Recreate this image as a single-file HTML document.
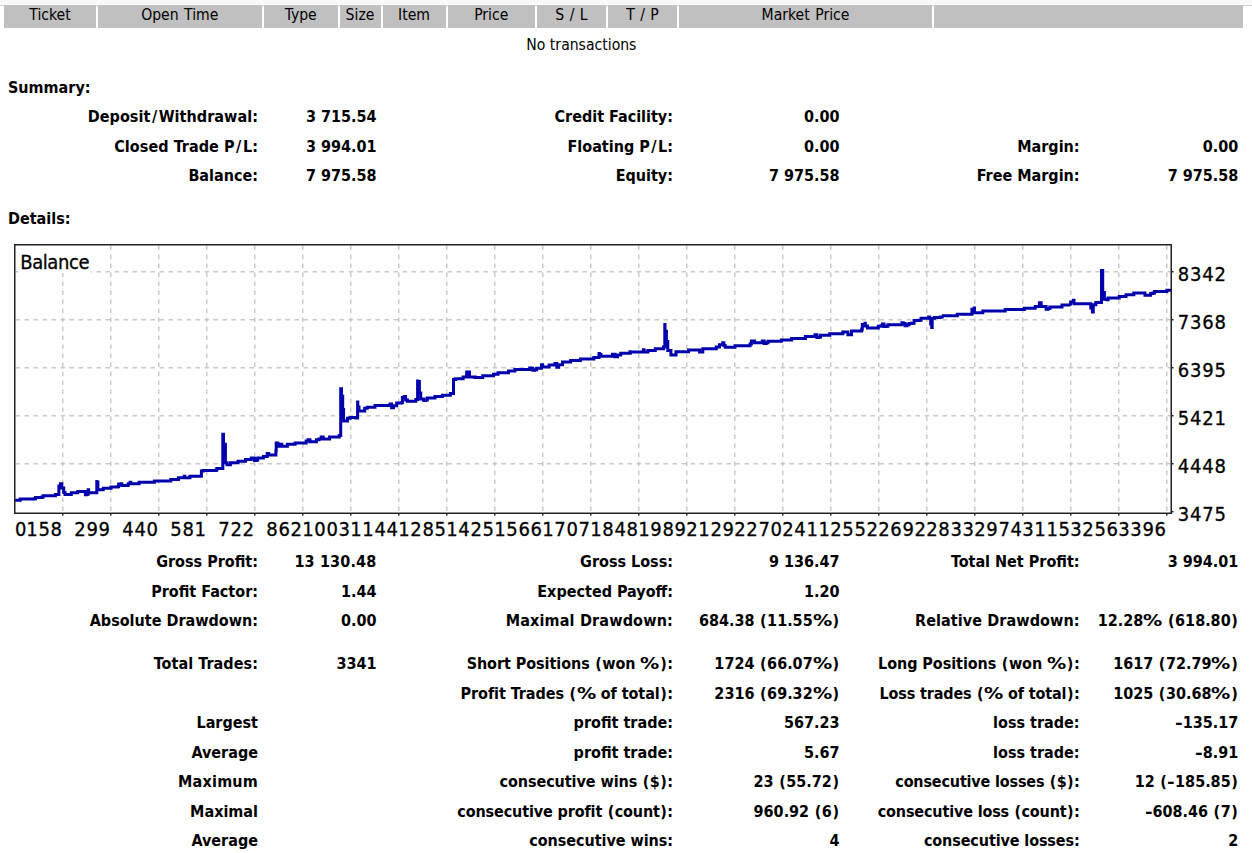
<!DOCTYPE html>
<html><head><meta charset="utf-8"><title>Statement</title>
<style>
html,body{margin:0;padding:0;background:#fff;}
body{width:1252px;height:853px;position:relative;overflow:hidden;font-family:"DejaVu Sans","Liberation Sans",sans-serif;font-stretch:condensed;color:#000;}
.topband{position:absolute;left:0;top:0;width:1252px;height:4px;background:#f8f8fa;border-bottom:1px solid #fdfdfd;}
.topline{position:absolute;left:0;top:5px;width:1252px;height:1px;background:#d0d0d0;}
.hc{position:absolute;top:5px;height:22.7px;word-spacing:1px;background:#c0c0c0;text-align:center;font-size:15.6px;line-height:20px;padding-top:0;box-sizing:border-box;white-space:nowrap;}
.t{position:absolute;white-space:nowrap;line-height:20px;height:20px;}
.b{font-weight:bold;font-size:16px;}
.r{font-size:15.6px;}
.b i{font-style:normal;padding:0 1.5px;}
.b u{text-decoration:none;display:inline-block;width:19.2px;transform-origin:0 50%;transform:scaleX(1.333);}
.b s{text-decoration:none;padding:0 0.55px;}
.b .m{display:inline-block;width:7.7px;transform-origin:0 50%;transform:scaleX(1.28);}
</style></head><body>
<div class="topband"></div><div class="topline"></div>
<div class="hc" style="left:4px;width:92px">Ticket</div>
<div class="hc" style="left:97.5px;width:164.5px">Open Time</div>
<div class="hc" style="left:264px;width:73.5px">Type</div>
<div class="hc" style="left:339.5px;width:41.0px">Size</div>
<div class="hc" style="left:382.5px;width:63.0px">Item</div>
<div class="hc" style="left:447.5px;width:87.5px">Price</div>
<div class="hc" style="left:537px;width:69px">S / L</div>
<div class="hc" style="left:608px;width:69px">T / P</div>
<div class="hc" style="left:679px;width:253px">Market Price</div>
<div class="hc" style="left:934px;width:309px"></div>
<div class="t r" style="top:35.20px;left:381.4px;width:400px;text-align:center">No transactions</div>
<div class="t b" style="top:77.90px;left:8px">Summary:</div>
<div class="t b" style="top:208.90px;left:8px">Details:</div>
<div class="t b" style="top:107.30px;right:994px;letter-spacing:0.05px">Deposit<i>/</i>Withdrawal:</div>
<div class="t b" style="top:107.30px;right:875.5px">3 715.54</div>
<div class="t b" style="top:107.30px;right:579px">Credit Facility:</div>
<div class="t b" style="top:107.30px;right:412.5px">0.00</div>
<div class="t b" style="top:136.80px;right:994px;letter-spacing:0.06px">Closed Trade P<i>/</i>L:</div>
<div class="t b" style="top:136.80px;right:875.5px">3 994.01</div>
<div class="t b" style="top:136.80px;right:579px">Floating P<i>/</i>L:</div>
<div class="t b" style="top:136.80px;right:412.5px">0.00</div>
<div class="t b" style="top:136.80px;right:172.4px">Margin:</div>
<div class="t b" style="top:136.80px;right:13.7px">0.00</div>
<div class="t b" style="top:166.10px;right:994px">Balance:</div>
<div class="t b" style="top:166.10px;right:875.5px">7 975.58</div>
<div class="t b" style="top:166.10px;right:579px">Equity:</div>
<div class="t b" style="top:166.10px;right:412.5px">7 975.58</div>
<div class="t b" style="top:166.10px;right:172.4px">Free Margin:</div>
<div class="t b" style="top:166.10px;right:13.7px">7 975.58</div>
<div class="t b" style="top:552.10px;right:994px">Gross Profit:</div>
<div class="t b" style="top:552.10px;right:875.5px;letter-spacing:0.17px">13 130.48</div>
<div class="t b" style="top:552.10px;right:579px">Gross Loss:</div>
<div class="t b" style="top:552.10px;right:412.5px">9 136.47</div>
<div class="t b" style="top:552.10px;right:172.4px">Total Net Profit:</div>
<div class="t b" style="top:552.10px;right:13.7px">3 994.01</div>
<div class="t b" style="top:581.70px;right:994px">Profit Factor:</div>
<div class="t b" style="top:581.70px;right:875.5px">1.44</div>
<div class="t b" style="top:581.70px;right:579px">Expected Payoff:</div>
<div class="t b" style="top:581.70px;right:412.5px">1.20</div>
<div class="t b" style="top:611.10px;right:994px">Absolute Drawdown:</div>
<div class="t b" style="top:611.10px;right:875.5px">0.00</div>
<div class="t b" style="top:611.10px;right:579px;letter-spacing:0.17px">Maximal Drawdown:</div>
<div class="t b" style="top:611.10px;right:412.5px">684.38 <s>(</s>11.55<u>%</u><s>)</s></div>
<div class="t b" style="top:611.10px;right:172.4px;letter-spacing:0.09px">Relative Drawdown:</div>
<div class="t b" style="top:611.10px;right:13.7px">12.28<u>%</u> <s>(</s>618.80<s>)</s></div>
<div class="t b" style="top:653.70px;right:994px;letter-spacing:0.06px">Total Trades:</div>
<div class="t b" style="top:653.70px;right:875.5px">3341</div>
<div class="t b" style="top:653.70px;right:579px;letter-spacing:-0.06px">Short Positions <s>(</s>won <u>%</u><s>)</s>:</div>
<div class="t b" style="top:653.70px;right:412.5px">1724 <s>(</s>66.07<u>%</u><s>)</s></div>
<div class="t b" style="top:653.70px;right:172.4px;letter-spacing:-0.06px">Long Positions <s>(</s>won <u>%</u><s>)</s>:</div>
<div class="t b" style="top:653.70px;right:13.7px">1617 <s>(</s>72.79<u>%</u><s>)</s></div>
<div class="t b" style="top:684.20px;right:579px;letter-spacing:-0.055px">Profit Trades <s>(</s><u>%</u> of total<s>)</s>:</div>
<div class="t b" style="top:684.20px;right:412.5px">2316 <s>(</s>69.32<u>%</u><s>)</s></div>
<div class="t b" style="top:684.20px;right:172.4px;letter-spacing:-0.13px">Loss trades <s>(</s><u>%</u> of total<s>)</s>:</div>
<div class="t b" style="top:684.20px;right:13.7px">1025 <s>(</s>30.68<u>%</u><s>)</s></div>
<div class="t b" style="top:712.70px;right:994px">Largest</div>
<div class="t b" style="top:712.70px;right:579px">profit trade:</div>
<div class="t b" style="top:712.70px;right:412.5px">567.23</div>
<div class="t b" style="top:712.70px;right:172.4px">loss trade:</div>
<div class="t b" style="top:712.70px;right:13.7px"><b class="m">-</b>135.17</div>
<div class="t b" style="top:743.20px;right:994px">Average</div>
<div class="t b" style="top:743.20px;right:579px">profit trade:</div>
<div class="t b" style="top:743.20px;right:412.5px">5.67</div>
<div class="t b" style="top:743.20px;right:172.4px">loss trade:</div>
<div class="t b" style="top:743.20px;right:13.7px"><b class="m">-</b>8.91</div>
<div class="t b" style="top:771.70px;right:994px;letter-spacing:0.2px">Maximum</div>
<div class="t b" style="top:771.70px;right:579px;letter-spacing:-0.07px">consecutive wins <s>(</s>$<s>)</s>:</div>
<div class="t b" style="top:771.70px;right:412.5px">23 <s>(</s>55.72<s>)</s></div>
<div class="t b" style="top:771.70px;right:172.4px;letter-spacing:-0.17px">consecutive losses <s>(</s>$<s>)</s>:</div>
<div class="t b" style="top:771.70px;right:13.7px">12 <s>(</s><b class="m">-</b>185.85<s>)</s></div>
<div class="t b" style="top:802.20px;right:994px">Maximal</div>
<div class="t b" style="top:802.20px;right:579px;letter-spacing:-0.126px">consecutive profit <s>(</s>count<s>)</s>:</div>
<div class="t b" style="top:802.20px;right:412.5px">960.92 <s>(</s>6<s>)</s></div>
<div class="t b" style="top:802.20px;right:172.4px;letter-spacing:-0.15px">consecutive loss <s>(</s>count<s>)</s>:</div>
<div class="t b" style="top:802.20px;right:13.7px"><b class="m">-</b>608.46 <s>(</s>7<s>)</s></div>
<div class="t b" style="top:830.70px;right:994px">Average</div>
<div class="t b" style="top:830.70px;right:579px;letter-spacing:-0.05px">consecutive wins:</div>
<div class="t b" style="top:830.70px;right:412.5px">4</div>
<div class="t b" style="top:830.70px;right:172.4px;letter-spacing:-0.11px">consecutive losses:</div>
<div class="t b" style="top:830.70px;right:13.7px">2</div>
<svg id="chart" width="1252" height="853" viewBox="0 0 1252 853" style="position:absolute;left:0;top:0">
<path d="M62.75 245.5V512.5M110.75 245.5V512.5M158.75 245.5V512.5M206.75 245.5V512.5M254.75 245.5V512.5M302.75 245.5V512.5M350.75 245.5V512.5M398.75 245.5V512.5M446.75 245.5V512.5M494.75 245.5V512.5M542.75 245.5V512.5M590.75 245.5V512.5M638.75 245.5V512.5M686.75 245.5V512.5M734.75 245.5V512.5M782.75 245.5V512.5M830.75 245.5V512.5M878.75 245.5V512.5M926.75 245.5V512.5M974.75 245.5V512.5M1022.75 245.5V512.5M1070.75 245.5V512.5M1118.75 245.5V512.5M1166.75 245.5V512.5M15.5 271.75H1170.5M15.5 319.75H1170.5M15.5 367.75H1170.5M15.5 415.75H1170.5M15.5 463.75H1170.5" stroke="#cacaca" stroke-width="1.5" stroke-dasharray="4.5 4.5" fill="none"/>
<rect x="18" y="246" width="72.5" height="27" fill="#fff"/>
<path d="M62.75 514V515.5M110.75 514V515.5M158.75 514V515.5M206.75 514V515.5M254.75 514V515.5M302.75 514V515.5M350.75 514V515.5M398.75 514V515.5M446.75 514V515.5M494.75 514V515.5M542.75 514V515.5M590.75 514V515.5M638.75 514V515.5M686.75 514V515.5M734.75 514V515.5M782.75 514V515.5M830.75 514V515.5M878.75 514V515.5M926.75 514V515.5M974.75 514V515.5M1022.75 514V515.5M1070.75 514V515.5M1118.75 514V515.5M1166.75 514V515.5M1172 271.75H1173.5M1172 319.75H1173.5M1172 367.75H1173.5M1172 415.75H1173.5M1172 463.75H1173.5M1172 511.75H1173.5" stroke="#222" stroke-width="1.5" fill="none"/>
<path d="M15.1 500.3H20.2V499.0H34.3V498.8H35.6V497.5H41.9V497.1H43.2V495.8H54.1H55.4V494.6H58.6H58.9V486.0H60.5V483.8H61.8V487.9H63.7V492.4H65.0V494.6H70.1H71.3V492.7H76.5H77.7V491.4H81.6H85.4V494.7H86.7V494.3H88.2V489.8H88.6V492.8H95.0H96.8V491.1H96.8V481.5H97.9V480.6H97.9V489.8H102.0H103.3V488.3H109.7H111.0V487.0H118.0V486.6H118.6V484.1H121.2V483.8H121.8V485.4H126.9H128.2V483.8H130.1V482.2H130.8V483.8H137.8H139.1V482.2H152.5H154.4V480.9H167.8H169.5V481.1H170.8V479.4H177.1H178.4V477.8H183.5H184.2V476.2H184.8V477.8H188.6H189.9V476.2H200.8H201.4V471.1H203.3V470.5H215.5V470.2H216.8V468.6H222.8H222.8V434.3H223.5H223.5V444.3H225.4H225.4V462.8H227.0V464.7H228.9H230.4V462.8H236.6H238.1V461.2H244.2H245.5V459.6H250.0H251.3V458.0H253.2V458.3H254.5V460.5H256.4V459.9H257.7V458.1H262.8H263.4V456.4H265.3H267.2V453.5H268.8V455.1H274.9H275.9V450.7H276.2V443.0H277.5V443.6H278.1V446.2H280.0V444.3H281.9V446.2H285.8H287.4V444.3H293.4H295.1V443.0H304.3H306.2V441.1H308.1V439.8H310.0V441.7H314.5H316.4V439.8H319.0V438.9H321.2V436.9H322.8V438.9H321.9V437.1H323.2V439.0H328.3H329.6V437.1H337.3H339.2V435.6H340.7H340.7V388.8H341.5H341.5V396.2H342.7H342.7V409.6H343.6H343.6V420.9H346.2H347.5V418.3H350.0V417.5H355.8V417.9H357.6V417.5H357.6V401.9H357.8H357.8V407.1H359.0H359.0V410.9H362.8H364.7V408.3H367.3V407.3H373.0H375.0V405.5H389.0H390.0V403.9H391.6V407.7H393.5V405.8H396.7V403.0H401.8V402.6H402.4V397.5H404.3V396.6H405.6V400.0H407.5V401.3H413.9H415.8V399.4H417.6V398.8H417.6V380.9H419.4V380.0H419.4V393.0H420.7H420.7V399.1H423.8V400.4H425.4V400.0H427.3V398.1H433.1H435.0V396.6H440.8H442.4V395.2H448.4H450.4V393.6H453.5H453.5V379.6H455.5V378.7H461.2H463.1V377.0H466.3V376.4H466.7V371.9H468.9H469.5V377.0H475.3V377.4H475.0V377.5H480.8H482.7V375.8H491.6H493.5V374.3H496.7H498.0V372.7H506.9H508.5V371.1H513.3H514.9V369.6H528.0H529.7V367.9H531.2V368.3H532.8V370.2H534.8V369.8H536.6V368.3H540.8H541.5V364.7H542.7V367.0H547.2H549.1V365.1H554.2H554.9V363.5H556.8V367.3H558.7V364.7H562.5V361.9H568.9H570.6V360.6H578.5H580.4V359.0H591.9H593.8V357.4H598.3H599.0V353.5H600.9V353.0H600.9V356.2H610.5H612.4V354.2H614.9V356.8H617.5V355.1H620.7V353.2H628.4H630.3V351.7H630.0V352.0H642.1H643.4V349.8H644.1V352.0H646.0H647.9V350.5H653.6H655.3V348.8H661.9H663.5V347.0H664.8H664.8V324.5H665.0H665.0V331.3H666.4H666.4V341.5H667.8H667.8V350.5H670.9V355.0H672.8H676.0V351.8H686.9H688.5V350.1H697.7H699.6V352.1H702.8V348.8H714.3H716.3V347.0H719.5V344.7H722.7V342.8H723.9V345.4H725.2V347.3H733.5H735.0V345.8H748.2H750.1V344.1H751.4V340.9H754.0H754.6V342.8H761.0H762.3V340.9H764.2V343.5H766.1V342.8H768.0V341.3H779.5H781.4V339.9H787.2H790.1V340.1H791.6V338.4H803.5H805.4V336.6H813.1H815.0V334.7H816.9V337.5H818.9V336.9H820.5V335.3H827.8H829.7V333.7H841.2H842.8V332.1H846.3H847.9V334.7H851.5V330.9H859.8H861.7V329.2H862.3V324.5H864.9V323.2H865.3V326.0H867.4V327.9H876.4H878.3V326.3H880.8V325.8H882.4V324.1H884.0V326.6H886.0V326.3H887.9V324.7H900.0H901.9V322.8H903.2V323.5H905.1V325.8H907.0V324.7H909.0V323.5H911.5V323.2H914.1V320.6H919.2V320.3H921.1V318.3H928.1H928.6V317.1H929.4V318.3H930.7H930.7V324.1H931.7H931.7V327.5H932.2H932.2V318.3H934.5V317.4H940.3V317.1H942.2V315.8H941.9H955.3H957.3V314.3H971.3H971.9V309.2H974.2V307.9H974.5V312.7H980.9H982.8V311.1H1003.3H1005.2V309.6H1022.4H1024.3V308.2H1033.3H1035.2V306.6H1039.0H1039.4V302.8H1041.0H1041.2V306.6H1044.2H1046.1V309.2H1048.0V308.6H1049.9V306.9H1060.1H1062.0V305.1H1069.1H1070.6V305.4H1070.6V302.0H1073.4V300.3H1074.0V303.7H1090.2H1090.8V308.1H1092.4V312.1H1093.3V304.8H1095.8V302.6H1101.5V302.0H1101.5V270.4H1102.7H1102.7V292.5H1104.4H1104.4V299.2H1107.0V299.8H1108.1V298.1H1117.6H1119.3V296.4H1124.3H1126.0V294.7H1132.1H1133.8V293.1H1143.3H1145.0V295.3H1149.5H1150.6V293.4H1152.8V293.1H1154.5V291.6H1165.1H1166.8V290.3H1170.7H1171" stroke="#0000ad" stroke-width="3" fill="none" stroke-linejoin="miter" stroke-linecap="butt"/>
<rect x="14.75" y="244.75" width="1156.5" height="268.5" fill="none" stroke="#222" stroke-width="1.5"/>
<g font-family="'DejaVu Sans','Liberation Sans',sans-serif" font-stretch="condensed" font-size="20" letter-spacing="0.65" fill="#000" stroke="#000" stroke-width="0.3">
<text x="20.2" y="269.4" letter-spacing="-0.4">Balance</text>
<text x="1177.7" y="281.35" letter-spacing="0.85">8342</text>
<text x="1177.7" y="329.35" letter-spacing="0.85">7368</text>
<text x="1177.7" y="377.35" letter-spacing="0.85">6395</text>
<text x="1177.7" y="425.35" letter-spacing="0.85">5421</text>
<text x="1177.7" y="473.35" letter-spacing="0.85">4448</text>
<text x="1177.7" y="521.2" letter-spacing="0.85">3475</text>
<text x="15" y="536.3">0</text>
<text x="62.65" y="536.3" text-anchor="end">158</text>
<text x="110.65" y="536.3" text-anchor="end">299</text>
<text x="158.65" y="536.3" text-anchor="end">440</text>
<text x="206.65" y="536.3" text-anchor="end">581</text>
<text x="254.65" y="536.3" text-anchor="end">722</text>
<text x="302.65" y="536.3" text-anchor="end">862</text>
<text x="350.65" y="536.3" text-anchor="end">1003</text>
<text x="398.65" y="536.3" text-anchor="end">1144</text>
<text x="446.65" y="536.3" text-anchor="end">1285</text>
<text x="494.65" y="536.3" text-anchor="end">1425</text>
<text x="542.65" y="536.3" text-anchor="end">1566</text>
<text x="590.65" y="536.3" text-anchor="end">1707</text>
<text x="638.65" y="536.3" text-anchor="end">1848</text>
<text x="686.65" y="536.3" text-anchor="end">1989</text>
<text x="734.65" y="536.3" text-anchor="end">2129</text>
<text x="782.65" y="536.3" text-anchor="end">2270</text>
<text x="830.65" y="536.3" text-anchor="end">2411</text>
<text x="878.65" y="536.3" text-anchor="end">2552</text>
<text x="926.65" y="536.3" text-anchor="end">2692</text>
<text x="974.65" y="536.3" text-anchor="end">2833</text>
<text x="1022.65" y="536.3" text-anchor="end">2974</text>
<text x="1070.65" y="536.3" text-anchor="end">3115</text>
<text x="1118.65" y="536.3" text-anchor="end">3256</text>
<text x="1166.65" y="536.3" text-anchor="end">3396</text>
</g>
</svg>
</body></html>
